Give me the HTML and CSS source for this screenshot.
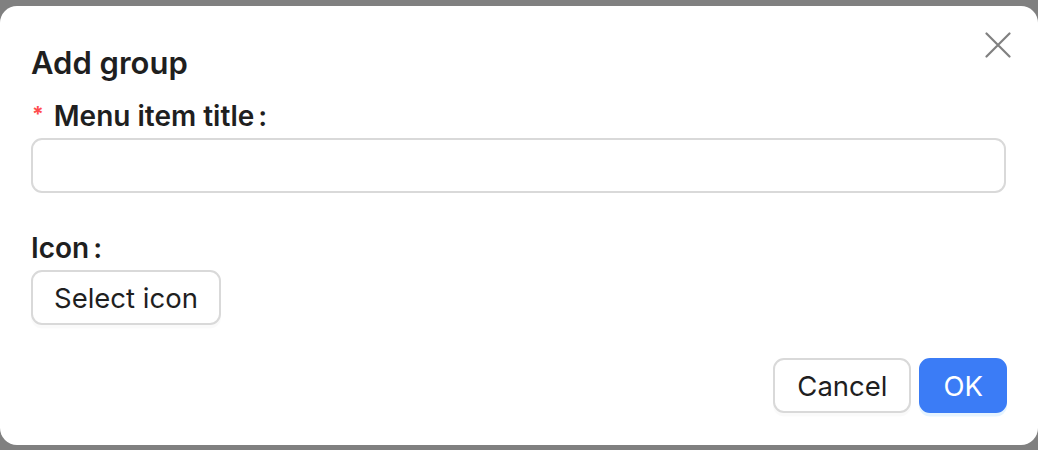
FILE: index.html
```html
<!DOCTYPE html>
<html lang="en">
<head>
<meta charset="utf-8">
<title>Add group</title>
<link rel="stylesheet" href="styles.css">
</head>
<body>
<div class="modal">
  <button class="close" type="button" aria-label="Close">
    <svg width="26" height="26" viewBox="0 0 26 26"><path d="M1.5 1.5 L24.5 24.5 M24.5 1.5 L1.5 24.5" stroke="#808080" stroke-width="2.2" stroke-linecap="round" fill="none"/></svg>
  </button>
  <h2 class="title">Add group</h2>
  <form class="form">
    <div class="item">
      <label class="label"><span class="req">*</span>Menu item title<span class="colon">:</span></label>
      <input class="input" type="text">
    </div>
    <div class="item item-icon">
      <label class="label">Icon<span class="colon">:</span></label>
      <div><button class="btn" type="button">Select icon</button></div>
    </div>
  </form>
  <div class="footer">
    <button class="btn" type="button">Cancel</button>
    <button class="btn primary" type="button">OK</button>
  </div>
</div>
</body>
</html>
```
FILE: styles.css
```css
* { box-sizing: border-box; }
html, body { margin: 0; padding: 0; }
body {
  background: #808080;
  font-family: Inter, "Noto Sans", "Liberation Sans", sans-serif;
  color: #1f1f1f;
  height: 450px;
  overflow: hidden;
}
.modal {
  position: relative;
  margin-top: 6px;
  width: 1038px;
  height: 439px;
  background: #fff;
  border-radius: 17px;
  padding: 37px 32px 32px 31px;
  display: flex;
  flex-direction: column;
}
.close {
  position: absolute;
  top: 26px;
  right: 27px;
  width: 26px;
  height: 26px;
  padding: 0;
  border: 0;
  background: none;
  display: flex;
}
.title {
  margin: 0;
  font-size: 31px;
  line-height: 40px;
  font-weight: 600;
}
.form {
  display: flex;
  flex-direction: column;
  margin-top: 17px;
}
.item {
  display: flex;
  flex-direction: column;
}
.item-icon { margin-top: 39px; }
.label {
  font-size: 28px;
  line-height: 32px;
  font-weight: 600;
  margin-bottom: 6px;
  display: flex;
  align-items: center;
}
.req {
  color: #ff4d4f;
  font-size: 21px;
  font-weight: 700;
  margin-left: 1px;
  margin-right: 10px;
  line-height: 1;
  position: relative;
  top: -2px;
}
.colon { margin-left: 4px; }
.input {
  height: 55px;
  width: 100%;
  border: 2px solid #d9d9d9;
  border-radius: 11px;
  font: inherit;
  font-size: 27px;
  padding: 0 20px;
  outline: none;
}
.btn {
  height: 55px;
  padding: 0 21px;
  border: 2px solid #d9d9d9;
  border-radius: 11px;
  background: #fff;
  font-family: inherit;
  font-size: 27.5px;
  color: #1f1f1f;
  box-shadow: 0 3.5px 0 rgba(0, 0, 0, 0.02);
}
.footer {
  margin-top: auto;
  display: flex;
  justify-content: flex-end;
  gap: 8px;
  margin-right: -1px;
}
.footer .btn { padding: 0 22px; }
.primary {
  background: #3b7cf6;
  border-color: #3b7cf6;
  color: #fff;
  box-shadow: 0 3.5px 0 rgba(5, 145, 255, 0.1);
}
```
